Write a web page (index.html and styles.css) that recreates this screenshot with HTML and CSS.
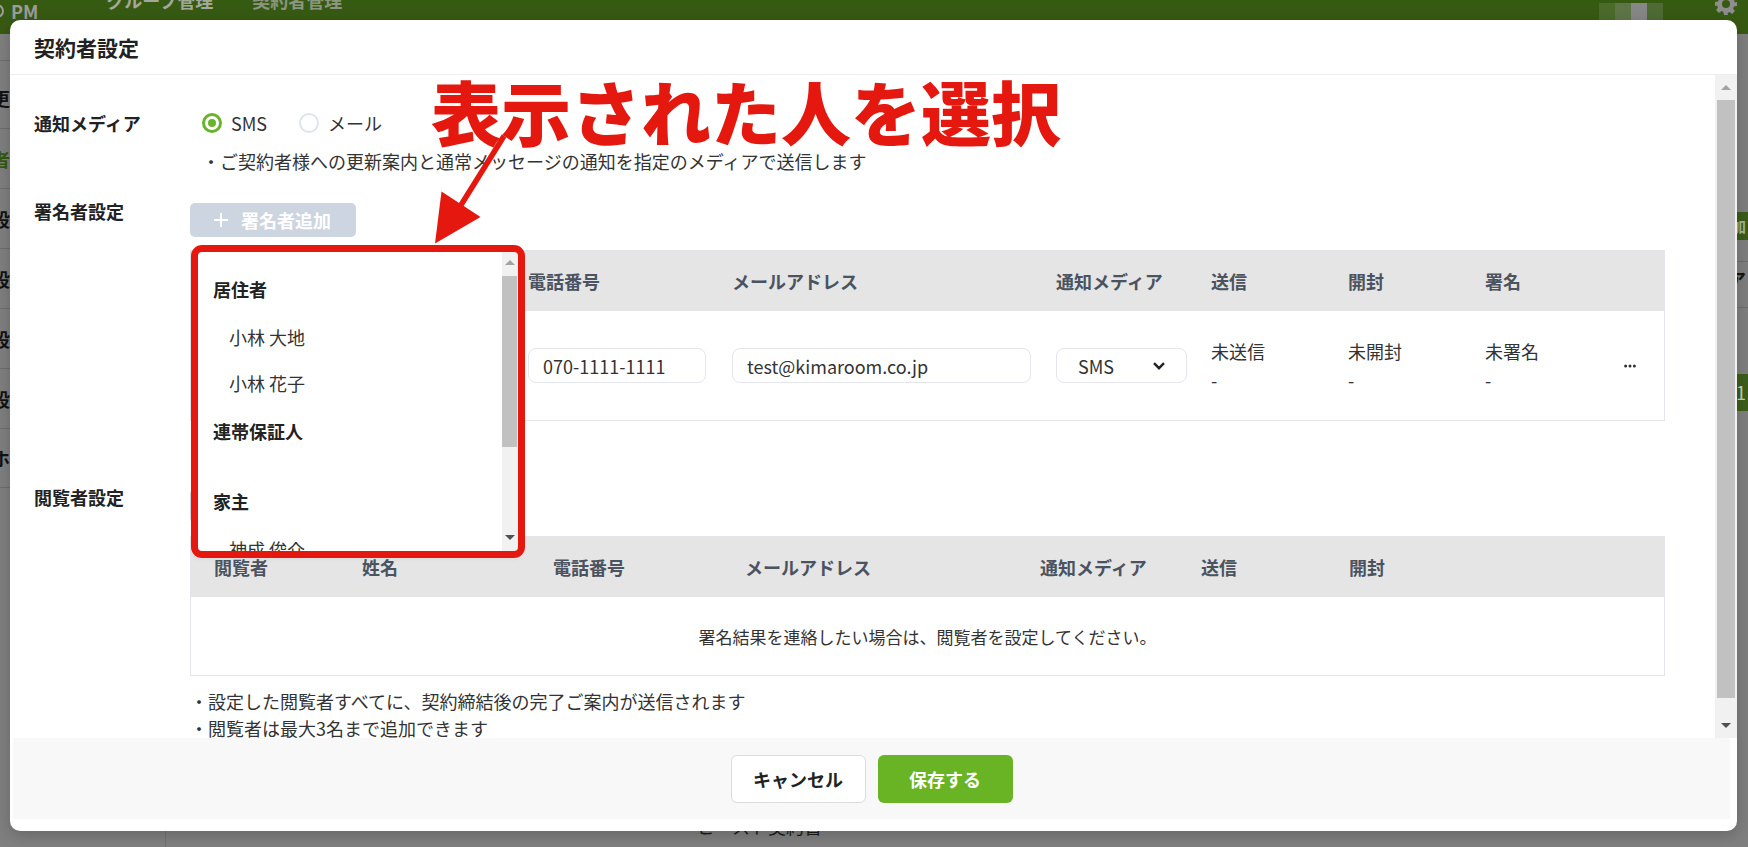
FILE: index.html
```html
<!DOCTYPE html>
<html lang="ja">
<head>
    <meta charset="UTF-8">
    <meta name="viewport" content="width=device-width, initial-scale=1.0">
    <title>契約者設定</title>
    <link rel="stylesheet" href="styles.css">
</head>
<body>
    <!-- page behind the dialog -->
    <div class="page">
        <header class="topnav">
            <div class="brand"><span class="brand-mark"></span>PM</div>
            <nav class="topnav-links">
                <span class="nav-link">グループ管理</span>
                <span class="nav-link dim">契約者管理</span>
            </nav>
            <div class="topnav-right">
                <div class="avatar-blur"><i class="b1"></i><i class="b2"></i><i class="b3"></i><i class="b4"></i></div>
                <svg class="gear" width="24" height="24" viewBox="0 0 24 24">
                    <path fill="#8e8e8e" d="M10 1h4l.6 3.1 1.9.8 2.6-1.8 2.8 2.8-1.8 2.6.8 1.9L23 10v4l-3.1.6-.8 1.9 1.8 2.6-2.8 2.8-2.6-1.8-1.9.8L14 23h-4l-.6-3.1-1.9-.8-2.6 1.8-2.8-2.8 1.8-2.6-.8-1.9L1 14v-4l3.1-.6.8-1.9-1.8-2.6 2.8-2.8 2.6 1.8 1.9-.8z"/>
                    <circle cx="12" cy="12" r="4" fill="#375a13"/>
                </svg>
            </div>
        </header>
        <div class="page-main">
            <aside class="side">
                <div class="side-item">契約更新</div>
                <div class="side-item active">契約者</div>
                <div class="side-item">基本設定</div>
                <div class="side-item">通知設定</div>
                <div class="side-item">署名設定</div>
                <div class="side-item">帳票設定</div>
                <div class="side-item">マイホーム</div>
            </aside>
            <main class="page-content">
                <p class="page-text">ピースト契約書</p>
            </main>
            <aside class="right-panel">
                <div class="rp-btn">追加</div>
                <div class="rp-head">メディア</div>
                <div class="rp-badge">1</div>
            </aside>
        </div>
    </div>

    <!-- dialog -->
    <div class="modal">
        <div class="modal-header">契約者設定</div>
        <div class="modal-body">
            <div class="modal-scroll">
                <section class="field">
                    <div class="field-label">通知メディア</div>
                    <div class="media-options">
                        <div class="radios">
                            <label class="radio-option"><span class="radio checked"></span>SMS</label>
                            <label class="radio-option second"><span class="radio"></span>メール</label>
                        </div>
                        <p class="desc">・ご契約者様への更新案内と通常メッセージの通知を指定のメディアで送信します</p>
                    </div>
                </section>

                <section class="field signers">
                    <div class="field-label">署名者設定</div>
                    <div class="field-content signer-content">
                        <button class="add-btn">
                            <svg width="14" height="14" viewBox="0 0 14 14"><path d="M7 0v14M0 7h14" stroke="#fff" stroke-width="2"/></svg>
                            署名者追加
                        </button>
                        <div class="table sign-table">
                            <div class="t-head">
                                <span>順番</span><span>署名者</span><span>電話番号</span><span>メールアドレス</span><span>通知メディア</span><span>送信</span><span>開封</span><span>署名</span><span></span>
                            </div>
                            <div class="t-row">
                                <span>1</span>
                                <span class="name-select">選択してください</span>
                                <span><span class="text-input phone">070-1111-1111</span></span>
                                <span><span class="text-input email">test@kimaroom.co.jp</span></span>
                                <span>
                                    <span class="select-box">SMS
                                        <svg width="12" height="8" viewBox="0 0 12 8"><path d="M1 1.2l5 5 5-5" fill="none" stroke="#222" stroke-width="2.4"/></svg>
                                    </span>
                                </span>
                                <span class="status">未送信<br>-</span>
                                <span class="status">未開封<br>-</span>
                                <span class="status">未署名<br>-</span>
                                <span class="more">
                                    <svg width="12" height="4" viewBox="0 0 12 4"><circle cx="1.6" cy="2" r="1.5" fill="#333"/><circle cx="6" cy="2" r="1.5" fill="#333"/><circle cx="10.4" cy="2" r="1.5" fill="#333"/></svg>
                                </span>
                            </div>
                        </div>
                        <p class="note first-note">・署名は上から順に依頼されます</p>

                        <div class="picker">
                            <div class="picker-list">
                                <div class="picker-group">
                                    <div class="picker-title">居住者</div>
                                    <div class="picker-item">小林 大地</div>
                                    <div class="picker-item">小林 花子</div>
                                </div>
                                <div class="picker-group empty">
                                    <div class="picker-title">連帯保証人</div>
                                </div>
                                <div class="picker-group">
                                    <div class="picker-title">家主</div>
                                    <div class="picker-item">神成 俊介</div>
                                </div>
                            </div>
                            <div class="scrollbar small">
                                <div class="sb-btn"><span class="tri-up"></span></div>
                                <div class="sb-thumb"></div>
                                <div class="sb-space"></div>
                                <div class="sb-btn bottom"><span class="tri-down"></span></div>
                            </div>
                        </div>
                    </div>
                </section>

                <section class="field viewers">
                    <div class="field-label">閲覧者設定</div>
                    <div class="field-content">
                        <button class="add-btn">
                            <svg width="14" height="14" viewBox="0 0 14 14"><path d="M7 0v14M0 7h14" stroke="#fff" stroke-width="2"/></svg>
                            閲覧者追加
                        </button>
                        <div class="table view-table">
                            <div class="t-head">
                                <span>閲覧者</span><span>姓名</span><span>電話番号</span><span>メールアドレス</span><span>通知メディア</span><span>送信</span><span>開封</span>
                            </div>
                            <div class="t-empty">署名結果を連絡したい場合は、閲覧者を設定してください。</div>
                        </div>
                        <p class="note">・設定した閲覧者すべてに、契約締結後の完了ご案内が送信されます</p>
                        <p class="note tight">・閲覧者は最大3名まで追加できます</p>
                    </div>
                </section>
            </div>
            <div class="scrollbar main">
                <div class="sb-btn"><span class="tri-up"></span></div>
                <div class="sb-thumb"></div>
                <div class="sb-space"></div>
                <div class="sb-btn bottom"><span class="tri-down"></span></div>
            </div>
        </div>
        <div class="modal-footer">
            <button class="btn cancel">キャンセル</button>
            <button class="btn save">保存する</button>
        </div>
    </div>

    <!-- annotation drawn over the screenshot -->
    <div class="annotations">
        <div class="callout-text">表示された人を選択</div>
        <svg class="callout-arrow" width="110" height="130" viewBox="0 0 110 130">
            <path d="M84 16L41 85" stroke="#e5180f" stroke-width="5.5" fill="none"/>
            <polygon points="21.5,71.5 60.5,97 15,123.5" fill="#e5180f"/>
        </svg>
        <div class="callout-box"></div>
    </div>
</body>
</html>
```

FILE: styles.css
```css
* {
    box-sizing: border-box;
}
body {
    margin: 0;
    height: 847px;
    overflow: hidden;
    position: relative;
    background-color: #7f7f7f;
    font-family: "Noto Sans CJK JP", "Noto Sans", sans-serif;
    color: #333;
}
p {
    margin: 0;
}
button {
    font-family: inherit;
}

/* background page */
.topnav {
    height: 34px;
    background-color: #375a13;
    display: flex;
    align-items: flex-start;
}
.brand {
    display: flex;
    align-items: center;
    gap: 7px;
    margin: 2px 0 0 -10px;
    height: 18px;
    font-size: 18px;
    font-weight: bold;
    line-height: 18px;
    color: #9c9c9c;
}
.brand-mark {
    width: 14px;
    height: 14px;
    border: 2px solid #9c9c9c;
    border-radius: 50%;
}
.topnav-links {
    display: flex;
    gap: 39px;
    margin: -9px 0 0 68px;
    font-size: 18px;
    font-weight: bold;
    line-height: 1;
}
.nav-link {
    color: #a3a89a;
}
.nav-link.dim {
    color: #8b9580;
}
.topnav-right {
    margin-left: auto;
    margin-right: 10px;
    display: flex;
    align-items: flex-start;
    gap: 51px;
}
.avatar-blur {
    display: flex;
    margin-top: 3px;
}
.avatar-blur i {
    width: 16px;
    height: 17px;
}
.avatar-blur .b1 { background-color: #4a6b2a; }
.avatar-blur .b2 { background-color: #5e7547; }
.avatar-blur .b3 { background-color: #878787; }
.avatar-blur .b4 { background-color: #4f6b33; }
.gear {
    margin-top: -8px;
}
.page-main {
    display: flex;
    height: 813px;
}
.side {
    width: 226px;
    margin-left: -60px;
    padding-top: 26px;
    border-right: 1px solid #717171;
}
.side-item {
    height: 60px;
    padding-left: 16px;
    display: flex;
    align-items: center;
    border-top: 1px solid #6e6e6e;
    font-size: 18px;
    font-weight: bold;
    color: #121212;
}
.side-item:first-child {
    height: 68px;
    padding-top: 6px;
}
.side-item:last-child {
    border-bottom: 1px solid #6e6e6e;
}
.side-item.active {
    color: #33590f;
}
.page-content {
    flex: 1;
    padding: 779px 0 0 531px;
}
.page-text {
    font-size: 18px;
    line-height: 26px;
    color: #1a1a1a;
}
.right-panel {
    width: 150px;
    display: flex;
    flex-direction: column;
    align-items: flex-end;
}
.rp-btn {
    margin-top: 178px;
    width: 70px;
    height: 28px;
    padding-right: 2px;
    background-color: #3b5c1a;
    color: #a4b48f;
    font-size: 15px;
    font-weight: bold;
    line-height: 28px;
    text-align: right;
}
.rp-head {
    margin-top: 21px;
    width: 100%;
    height: 47px;
    padding: 4px 2px 0 0;
    border-top: 1px solid #6e6e6e;
    border-bottom: 1px solid #6e6e6e;
    font-size: 18px;
    font-weight: bold;
    text-align: right;
    color: #151515;
}
.rp-badge {
    margin-top: 66px;
    width: 60px;
    height: 37px;
    padding-right: 2px;
    background-color: #3c5e1b;
    color: #c6d2b8;
    font-size: 18px;
    line-height: 37px;
    text-align: right;
}

/* dialog */
.modal {
    position: absolute;
    left: 10px;
    top: 20px;
    width: 1727px;
    height: 811px;
    padding-bottom: 12px;
    background-color: white;
    border-radius: 10px;
    box-shadow: 0 4px 16px rgba(0, 0, 0, 0.2);
    display: flex;
    flex-direction: column;
    overflow: hidden;
}
.modal-header {
    flex: none;
    height: 55px;
    padding-left: 24px;
    display: flex;
    align-items: center;
    border-bottom: 1px solid #eceef1;
    font-size: 21px;
    font-weight: bold;
    color: #222;
}
.modal-body {
    flex: none;
    height: 663px;
    display: flex;
}
.modal-scroll {
    flex: 1;
    overflow: hidden;
    padding: 35px 50px 0 24px;
}
.field {
    display: grid;
    grid-template-columns: 156px 1fr;
}
.field-label {
    font-size: 18px;
    font-weight: bold;
    line-height: 26px;
    color: #222;
}
.media-options {
    padding-left: 12px;
}
.radios {
    display: flex;
    align-items: center;
    height: 26px;
}
.radio-option {
    display: flex;
    align-items: center;
    gap: 9px;
    font-size: 18px;
    color: #333;
}
.radio-option.second {
    margin-left: 32px;
}
.radio {
    width: 20px;
    height: 20px;
    border: 2px solid #dfe4ec;
    border-radius: 50%;
    display: flex;
    align-items: center;
    justify-content: center;
}
.radio.checked {
    border: 3px solid #69b42a;
}
.radio.checked::after {
    content: "";
    width: 8px;
    height: 8px;
    border-radius: 50%;
    background-color: #69b42a;
}
.desc {
    margin-top: 12px;
    font-size: 18px;
    line-height: 26px;
}
.signers {
    margin-top: 24px;
}
.viewers {
    margin-top: 30px;
}
.signer-content {
    position: relative;
}
.add-btn {
    margin-top: 5px;
    width: 166px;
    height: 34px;
    padding: 0 0 0 24px;
    display: flex;
    align-items: center;
    gap: 13px;
    background-color: #cdd5e0;
    color: white;
    border: none;
    border-radius: 5px;
    font-size: 18px;
    font-weight: bold;
}
.table {
    margin-top: 13px;
    border: 1px solid #e3e6ea;
}
.t-head,
.t-row {
    display: grid;
    align-items: center;
    padding-left: 23px;
}
.sign-table .t-head,
.sign-table .t-row {
    grid-template-columns: 154px 160px 204px 324px 155px 137px 137px 139px 1fr;
}
.view-table .t-head {
    grid-template-columns: 148px 191px 192px 295px 161px 148px 1fr;
}
.t-head {
    height: 60px;
    background-color: #e5e5e5;
    font-size: 18px;
    font-weight: bold;
    color: #4b5360;
}
.t-row {
    height: 109px;
    font-size: 18px;
}
.text-input,
.select-box,
.name-select {
    height: 35px;
    display: flex;
    align-items: center;
    border: 1px solid #e3e6ea;
    border-radius: 8px;
    font-size: 18px;
    color: #333;
}
.text-input {
    padding-left: 14px;
}
.phone {
    width: 178px;
}
.email {
    width: 299px;
}
.select-box {
    width: 131px;
    padding: 0 21px;
    justify-content: space-between;
}
.name-select {
    width: 140px;
    padding-left: 10px;
    font-size: 14px;
}
.status {
    line-height: 29px;
}
.more {
    display: flex;
    align-items: center;
}
.t-empty {
    height: 78px;
    display: flex;
    align-items: center;
    justify-content: center;
    font-size: 17px;
}
.note {
    margin-top: 12px;
    font-size: 18px;
    line-height: 27px;
}
.note.tight {
    margin-top: 0;
}
.note.first-note {
    margin-top: 7px;
    line-height: 26px;
}

/* open name picker */
.picker {
    position: absolute;
    left: 6px;
    top: 52px;
    width: 322px;
    height: 303px;
    display: flex;
    background-color: white;
    box-shadow: 0 2px 8px rgba(0, 0, 0, 0.15);
    overflow: hidden;
}
.picker-list {
    flex: 1;
    padding-top: 14px;
}
.picker-title {
    height: 50px;
    padding-left: 17px;
    display: flex;
    align-items: center;
    font-size: 18px;
    font-weight: bold;
    color: #222;
}
.picker-item {
    height: 46px;
    padding-left: 33px;
    display: flex;
    align-items: center;
    font-size: 18px;
    color: #333;
}
.picker-group.empty {
    padding-bottom: 20px;
}

/* scrollbars */
.scrollbar {
    flex: none;
    display: flex;
    flex-direction: column;
    background-color: #f1f1f1;
}
.scrollbar.main {
    width: 22px;
}
.scrollbar.small {
    width: 16px;
}
.sb-btn {
    height: 24px;
    display: flex;
    align-items: center;
    justify-content: center;
}
.main .sb-btn.bottom {
    height: 26px;
}
.small .sb-btn.bottom {
    margin-bottom: 4px;
}
.sb-thumb {
    margin: 1px 2px 0;
    background-color: #c1c1c1;
}
.main .sb-thumb {
    height: 598px;
}
.small .sb-thumb {
    height: 171px;
    margin: 2px 1px 0 0;
}
.sb-space {
    flex: 1;
}
.tri-up {
    width: 0;
    height: 0;
    border-left: 5px solid transparent;
    border-right: 5px solid transparent;
    border-bottom: 5px solid #a3a3a3;
}
.tri-down {
    width: 0;
    height: 0;
    border-left: 5px solid transparent;
    border-right: 5px solid transparent;
    border-top: 5px solid #505050;
}

.modal-footer {
    flex: none;
    height: 81px;
    margin: 0 7px 0 3px;
    background-color: #f8f8f8;
    display: flex;
    align-items: center;
    justify-content: center;
    gap: 12px;
}
.btn {
    width: 135px;
    height: 48px;
    border-radius: 6px;
    font-size: 18px;
    font-weight: bold;
    cursor: pointer;
}
.btn.cancel {
    background-color: white;
    border: 1px solid #dcdcdc;
    color: #222;
}
.btn.save {
    background-color: #69b425;
    border: none;
    color: white;
}

/* annotation overlay */
.annotations {
    position: absolute;
    inset: 0;
    pointer-events: none;
}
.callout-text {
    position: absolute;
    left: 431px;
    top: 76px;
    font-size: 70px;
    font-weight: 900;
    line-height: 1;
    white-space: nowrap;
    color: #e5180f;
}
.callout-arrow {
    position: absolute;
    left: 420px;
    top: 120px;
}
.callout-box {
    position: absolute;
    left: 191px;
    top: 245px;
    width: 334px;
    height: 313px;
    border: 7px solid #e5180f;
    border-radius: 11px;
}
```
